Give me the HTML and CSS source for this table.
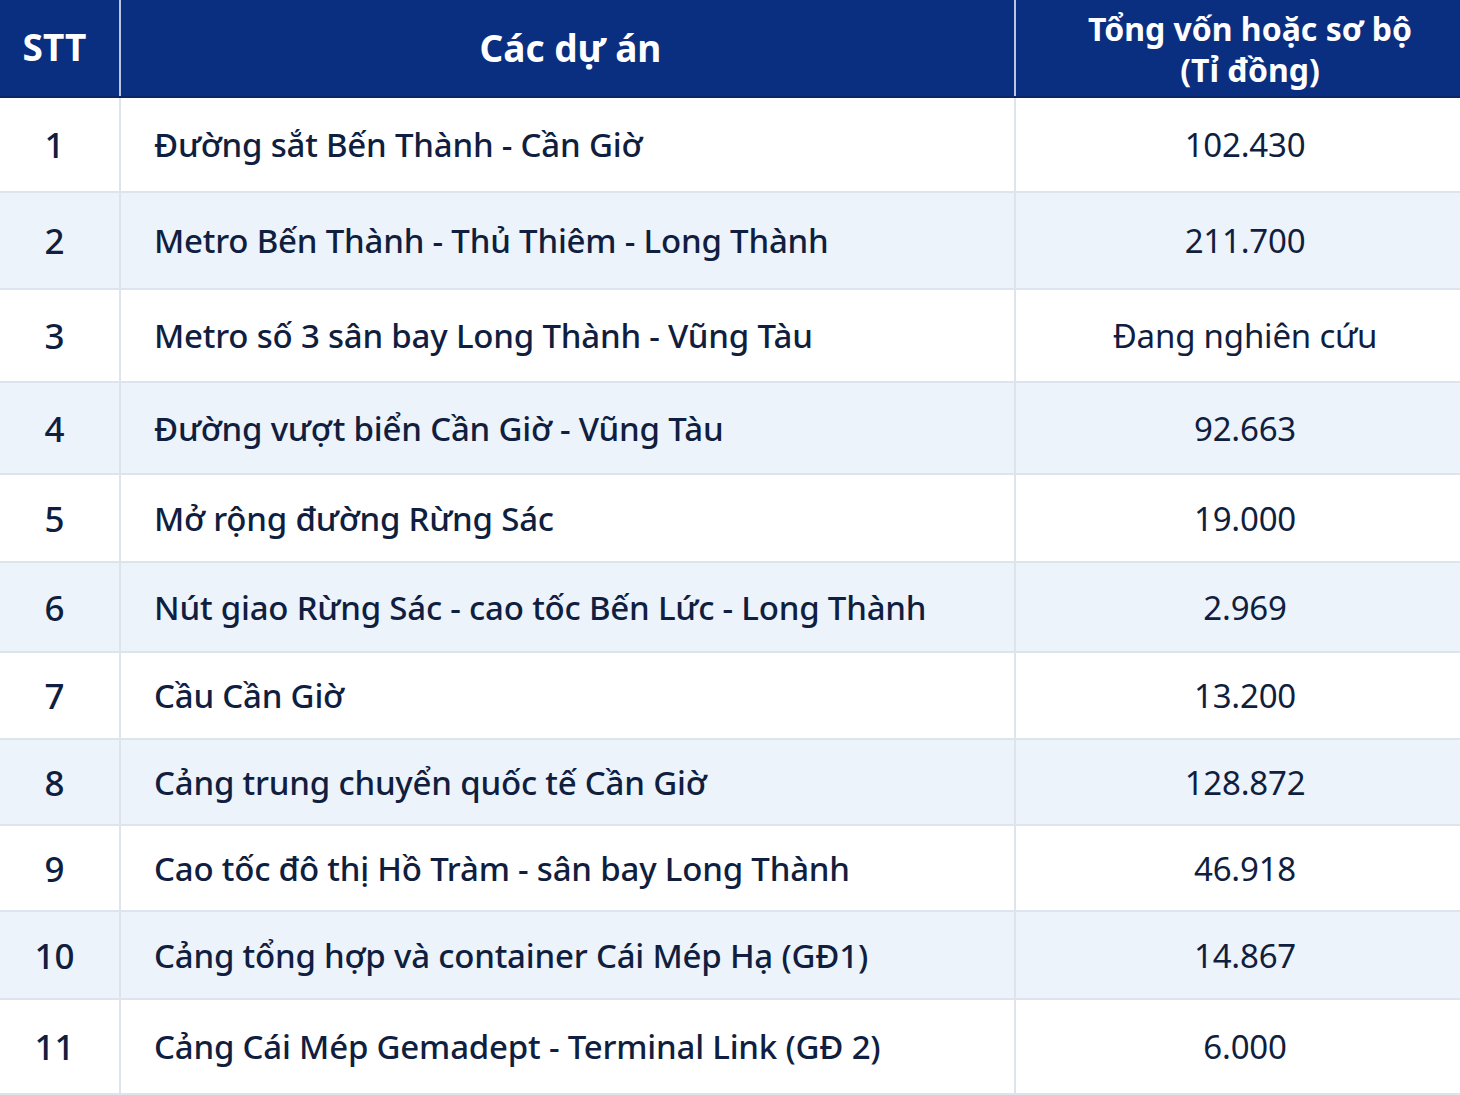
FILE: index.html
```html
<!DOCTYPE html>
<html lang="vi">
<head>
<meta charset="utf-8">
<title>Các dự án</title>
<link rel="stylesheet" href="styles.css">
</head>
<body>
<table class="projects">
  <colgroup>
    <col class="c-stt">
    <col class="c-name">
    <col class="c-val">
  </colgroup>
  <thead>
    <tr>
      <th class="stt">STT</th>
      <th class="name-h">Các dự án</th>
      <th class="val-h"><span class="hl">Tổng vốn hoặc sơ bộ</span><span class="hl">(Tỉ đồng)</span></th>
    </tr>
  </thead>
  <tbody>
    <tr><td class="stt">1</td><td class="name">Đường sắt Bến Thành - Cần Giờ</td><td class="val">102.430</td></tr>
    <tr><td class="stt">2</td><td class="name">Metro Bến Thành - Thủ Thiêm - Long Thành</td><td class="val">211.700</td></tr>
    <tr><td class="stt">3</td><td class="name">Metro số 3 sân bay Long Thành - Vũng Tàu</td><td class="val">Đang nghiên cứu</td></tr>
    <tr><td class="stt">4</td><td class="name">Đường vượt biển Cần Giờ - Vũng Tàu</td><td class="val">92.663</td></tr>
    <tr><td class="stt">5</td><td class="name">Mở rộng đường Rừng Sác</td><td class="val">19.000</td></tr>
    <tr><td class="stt">6</td><td class="name">Nút giao Rừng Sác - cao tốc Bến Lức - Long Thành</td><td class="val">2.969</td></tr>
    <tr><td class="stt">7</td><td class="name">Cầu Cần Giờ</td><td class="val">13.200</td></tr>
    <tr><td class="stt">8</td><td class="name">Cảng trung chuyển quốc tế Cần Giờ</td><td class="val">128.872</td></tr>
    <tr><td class="stt">9</td><td class="name">Cao tốc đô thị Hồ Tràm - sân bay Long Thành</td><td class="val">46.918</td></tr>
    <tr><td class="stt">10</td><td class="name">Cảng tổng hợp và container Cái Mép Hạ (GĐ1)</td><td class="val">14.867</td></tr>
    <tr><td class="stt">11</td><td class="name">Cảng Cái Mép Gemadept - Terminal Link (GĐ 2)</td><td class="val">6.000</td></tr>
  </tbody>
</table>
</body>
</html>
```
FILE: styles.css
```css
html, body {
  margin: 0;
  padding: 0;
  background: #ffffff;
}
body {
  font-family: "Noto Sans", "Open Sans", sans-serif;
  color: #101e40;
  overflow: hidden;
}
.projects {
  width: 1460px;
  border-collapse: collapse;
  table-layout: fixed;
}
.c-stt { width: 120px; }
.c-name { width: 895px; }
.c-val { width: 445px; }

thead th {
  background: #0b2f80;
  color: #ffffff;
  font-weight: 700;
  height: 92px;
  border-bottom: 2px solid #0a2666;
  padding: 0;
  vertical-align: middle;
}
thead th + th {
  border-left: 2px solid #b8c6de;
}
th.stt {
  font-size: 37px;
  padding-right: 10px;
  padding-bottom: 4px;
}
.name-h {
  font-size: 37px;
  padding-left: 6px;
  padding-bottom: 2px;
}
.val-h {
  font-size: 32px;
  padding-left: 24px;
  padding-top: 2px;
}
.hl {
  display: block;
  line-height: 41px;
}

tbody td {
  padding: 0;
  vertical-align: middle;
  border-bottom: 2px solid #dde4ee;
}
tbody td + td {
  border-left: 2px solid #dfe4ec;
}
tbody tr:nth-child(even) td {
  background: #ecf3fb;
}
td.stt {
  text-align: center;
  font-size: 35px;
  font-weight: 500;
  padding-right: 10px;
}
td.name {
  font-size: 33px;
  font-weight: 500;
  padding-left: 33px;
  letter-spacing: -0.2px;
  white-space: nowrap;
}
td.val {
  text-align: center;
  font-size: 33px;
  font-weight: 400;
  padding-left: 14px;
  letter-spacing: -0.2px;
}

tbody tr:nth-child(1) td { height: 93px; }
tbody tr:nth-child(2) td { height: 95px; }
tbody tr:nth-child(3) td { height: 91px; }
tbody tr:nth-child(4) td { height: 90px; }
tbody tr:nth-child(5) td { height: 86px; }
tbody tr:nth-child(6) td { height: 88px; }
tbody tr:nth-child(7) td { height: 85px; }
tbody tr:nth-child(8) td { height: 84px; }
tbody tr:nth-child(9) td { height: 84px; }
tbody tr:nth-child(10) td { height: 86px; }
tbody tr:nth-child(11) td { height: 93px; }
```
